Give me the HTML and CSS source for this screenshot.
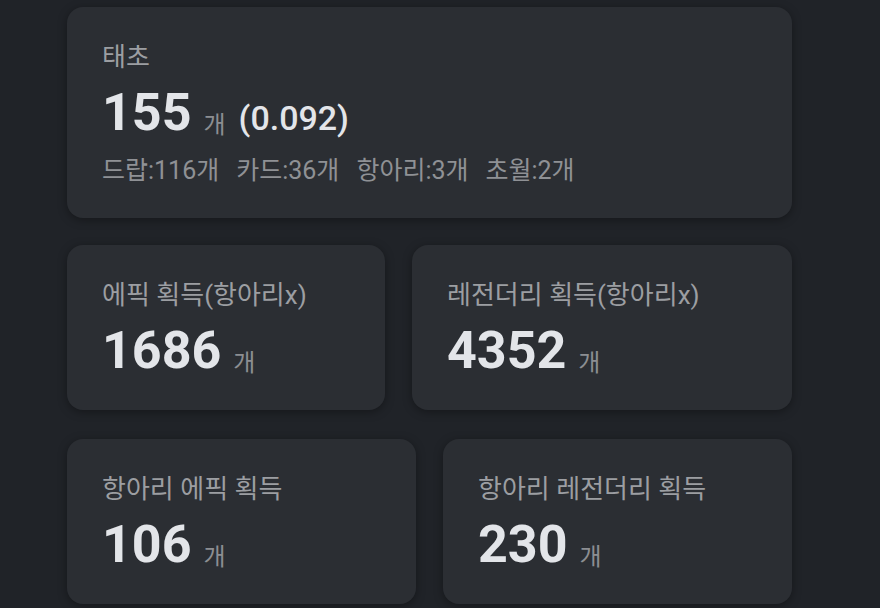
FILE: index.html
```html
<!DOCTYPE html>
<html lang="ko">
<head>
<meta charset="utf-8">
<link rel="stylesheet" href="styles.css">
</head>
<body>
<main class="page">
  <section class="card card-main">
    <div class="label">태초</div>
    <div class="value"><span class="num">155</span><span class="unit">개</span><span class="ratio">(0.092)</span></div>
    <div class="detail"><span class="item">드랍:116개</span><span class="item">카드:36개</span><span class="item">항아리:3개</span><span class="item">초월:2개</span></div>
  </section>
  <div class="row row-a">
    <section class="card">
      <div class="label">에픽 획득(항아리x)</div>
      <div class="value"><span class="num">1686</span><span class="unit">개</span></div>
    </section>
    <section class="card">
      <div class="label">레전더리 획득(항아리x)</div>
      <div class="value"><span class="num">4352</span><span class="unit">개</span></div>
    </section>
  </div>
  <div class="row row-b">
    <section class="card">
      <div class="label">항아리 에픽 획득</div>
      <div class="value"><span class="num">106</span><span class="unit">개</span></div>
    </section>
    <section class="card">
      <div class="label">항아리 레전더리 획득</div>
      <div class="value"><span class="num">230</span><span class="unit">개</span></div>
    </section>
  </div>
</main>
</body>
</html>
```
FILE: styles.css
```css
html, body {
  margin: 0;
  padding: 0;
  background: #202328;
  height: 100%;
  overflow: hidden;
}
body {
  font-family: Roboto, "Noto Sans CJK KR", sans-serif;
}
.page {
  width: 725px;
  margin-left: 67px;
  padding-top: 7px;
  display: flex;
  flex-direction: column;
}
.card {
  background: #2b2e33;
  border-radius: 16px;
  padding: 33px 35px 29px;
  box-shadow: 0 2px 10px rgba(0, 0, 0, 0.35);
  min-width: 0;
}
.card-main {
  padding-top: 33px;
  padding-bottom: 31px;
}
.row {
  display: grid;
  column-gap: 27px;
}
.row-a {
  margin-top: 27px;
  grid-template-columns: 318fr 380fr;
}
.row-b {
  margin-top: 29px;
  grid-template-columns: 1fr 1fr;
}
.label {
  font-size: 26px;
  line-height: 34px;
  color: #9c9ea2;
  white-space: nowrap;
}
.value {
  margin-top: 9px;
  height: 60px;
  line-height: 60px;
  white-space: nowrap;
}
.num {
  font-size: 52px;
  font-weight: 700;
  color: #e3e5e9;
}
.unit {
  font-size: 24px;
  color: #8c8e92;
  margin-left: 12px;
  position: relative;
  top: 3px;
}
.ratio {
  font-size: 34px;
  font-weight: 500;
  color: #e3e5e9;
  margin-left: 13px;
}
.detail {
  margin-top: 12px;
  font-size: 25px;
  line-height: 32px;
  color: #8f9195;
  white-space: nowrap;
}
.item {
  margin-right: 17px;
}
```
